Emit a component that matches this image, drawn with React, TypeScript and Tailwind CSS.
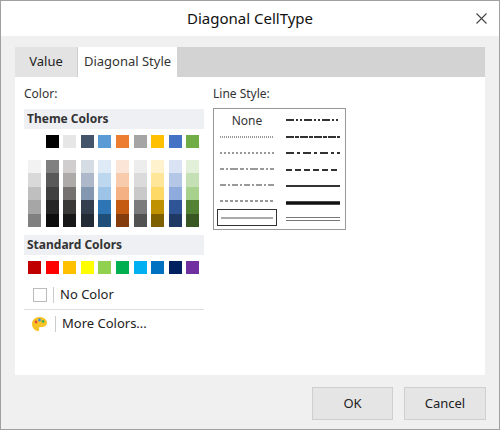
import React from "react";

const top = ["#ffffff","#000000","#e7e6e6","#44546a","#5b9bd5","#ed7d31","#a5a5a5","#ffc000","#4472c4","#70ad47"];
const grad = [
  ["#f2f2f2","#d9d9d9","#bfbfbf","#a6a6a6","#808080"],
  ["#808080","#595959","#404040","#262626","#0d0d0d"],
  ["#d0cece","#aeaaaa","#767171","#3b3838","#181717"],
  ["#d6dce4","#adb9ca","#8497b0","#333f4f","#222a35"],
  ["#deebf7","#bdd7ee","#9dc3e6","#2e75b6","#1f4e79"],
  ["#fbe5d6","#f8cbad","#f4b183","#c55a11","#843c0c"],
  ["#ededed","#dbdbdb","#c9c9c9","#7b7b7b","#525252"],
  ["#fff2cc","#ffe699","#ffd966","#bf9000","#7f6000"],
  ["#dae3f3","#b4c7e7","#8faadc","#2f5597","#203864"],
  ["#e2f0d9","#c5e0b4","#a9d18e","#548235","#385723"],
];
const std = ["#c00000","#ff0000","#ffc000","#ffff00","#92d050","#00b050","#00b0f0","#0070c0","#002060","#7030a0"];

const L = ({ d, w = 1, c = "#333", dbl = false }: { d?: string; w?: number; c?: string; dbl?: boolean }) => (
  <svg width="54" height="6" className="block">
    {dbl ? (
      <>
        <line x1="0" y1="1.5" x2="54" y2="1.5" stroke="#777" strokeWidth="1" />
        <line x1="0" y1="4.5" x2="54" y2="4.5" stroke="#777" strokeWidth="1" />
      </>
    ) : (
      <line x1="0" y1="3" x2="54" y2="3" stroke={c} strokeWidth={w} strokeDasharray={d} />
    )}
  </svg>
);

export default function App() {
  const font = { fontFamily: '"Segoe UI","Noto Sans","Open Sans",sans-serif' };
  return (
    <div style={font} className="w-[500px] h-[430px] border border-[#a0a0a0] bg-[#f0f0f0] flex flex-col text-[#222]">
      <div className="h-[35px] bg-white flex items-center justify-center relative shrink-0">
        <span className="text-[15px] text-[#111]">Diagonal CellType</span>
        <svg className="absolute right-[12px] top-[12px]" width="11" height="11" viewBox="0 0 11 11">
          <path d="M0.5 0.5L10.5 10.5M10.5 0.5L0.5 10.5" stroke="#444" strokeWidth="1.1" />
        </svg>
      </div>
      <div className="mx-[14px] mt-[11px] flex flex-col">
        <div className="h-[30px] bg-[#d3d3d3] flex text-[13px]">
          <div className="w-[63px] bg-[#e3e3e3] border-r border-[#cfcfcf] flex items-center justify-center">Value</div>
          <div className="w-[99px] bg-white flex items-center justify-center text-[#333]">Diagonal Style</div>
        </div>
        <div className="h-[298px] bg-white flex pl-[9px] pt-[10px] text-[12px]">
          <div className="w-[180px]">
            <div className="h-[14px] leading-[14px] text-[#333]">Color:</div>
            <div className="mt-[8px] h-[20px] bg-[#eff0f4] px-[3px] font-bold text-[#333] leading-[20px]">Theme Colors</div>
            <div className="flex gap-[4.6px] pl-[4px] mt-[6px]">
              {top.map((c) => <div key={c} className="w-[13px] h-[13px]" style={{ background: c }} />)}
            </div>
            <div className="flex gap-[4.6px] pl-[4px] mt-[12px]">
              {grad.map((col, i) => (
                <div key={i} className="flex flex-col">
                  {col.map((c) => <div key={c} className="w-[13px] h-[13.4px]" style={{ background: c }} />)}
                </div>
              ))}
            </div>
            <div className="mt-[8px] h-[20px] bg-[#eff0f4] px-[3px] font-bold text-[#333] leading-[20px]">Standard Colors</div>
            <div className="flex gap-[4.6px] pl-[4px] mt-[6px]">
              {std.map((c) => <div key={c} className="w-[13px] h-[13px]" style={{ background: c }} />)}
            </div>
            <div className="flex items-center h-[18px] mt-[12px] pl-[9px]">
              <div className="w-[14px] h-[14px] border border-[#bbb]" />
              <div className="w-px h-[16px] bg-[#ccc] ml-[6px] mr-[6px]" />
              <span className="text-[13px]">No Color</span>
            </div>
            <div className="h-px bg-[#ddd] mt-[5px]" />
            <div className="flex items-center h-[18px] mt-[5px] pl-[7px]">
              <svg width="17" height="16" viewBox="0 0 17 16">
                <path d="M8.5 1C4 1 1 4 1 8c0 4 3 7 6 7 1.5 0 1.5-1.3 1-2.2-.5-1 .2-1.8 1.3-1.8H11c3 0 5-1.8 5-4.2C16 3.6 12.7 1 8.5 1z" fill="#f7c325" />
                <circle cx="5" cy="6" r="1.4" fill="#e64a3b" />
                <circle cx="8.5" cy="4" r="1.4" fill="#3a8ee6" />
                <circle cx="12" cy="5.5" r="1.4" fill="#4caf50" />
              </svg>
              <div className="w-px h-[16px] bg-[#ccc] ml-[7px] mr-[6px]" />
              <span className="text-[13px]">More Colors...</span>
            </div>
          </div>
          <div className="ml-[9px]">
            <div className="h-[14px] leading-[14px] text-[#333]">Line Style:</div>
            <div className="mt-[7px] w-[133px] h-[122px] border border-[#999] flex px-[3px] pt-[3px] gap-[9px]">
              <div className="flex flex-col w-[60px]">
                <div className="h-[17px] flex items-center justify-center text-[12px] text-[#333]">None</div>
                {[["1 1",1],["2 2",1],["4 2 2 2 8 2",1],["6 2 2 2",1],["3 2",1]].map(([d], i) => (
                  <div key={i} className="h-[16px] flex items-center px-[3px]"><L d={d as string} /></div>
                ))}
                <div className="h-[17px] border border-[#333] flex items-center px-[3px]"><L c="#555" /></div>
              </div>
              <div className="flex flex-col w-[54px]">
                {[
                  { d: "8 2 2 2 2 2", w: 2 },
                  { d: "8 1 4 1", w: 2 },
                  { d: "8 3 3 3", w: 2 },
                  { d: "6 3", w: 2 },
                  { w: 2 },
                  { w: 3.5, c: "#111" },
                  { dbl: true },
                ].map((p, i) => (
                  <div key={i} className="h-[16.5px] flex items-center"><L {...p} /></div>
                ))}
              </div>
            </div>
          </div>
        </div>
      </div>
      <div className="flex justify-end gap-[11px] mr-[13px] mt-[12px] text-[13px]">
        <div className="w-[81px] h-[33px] bg-[#e5e5e5] border border-[#cfcfcf] flex items-center justify-center">OK</div>
        <div className="w-[82px] h-[33px] bg-[#e5e5e5] border border-[#cfcfcf] flex items-center justify-center">Cancel</div>
      </div>
    </div>
  );
}
